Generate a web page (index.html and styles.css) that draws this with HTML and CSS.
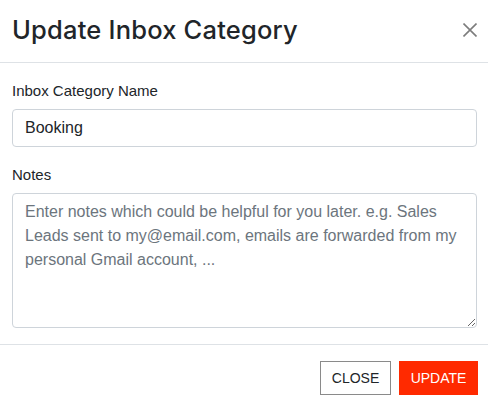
FILE: index.html
```html
<!DOCTYPE html>
<html>
<head>
<meta charset="utf-8">
<link rel="stylesheet" href="styles.css">
</head>
<body>
<div class="modal">
  <div class="modal-header">
    <h5 class="modal-title">Update Inbox Category</h5>
    <button class="close" aria-label="Close">
      <svg width="14" height="14" viewBox="0 0 14 14"><path d="M0.5 0.5 L13.5 13.5 M13.5 0.5 L0.5 13.5" stroke="#7d7d7d" stroke-width="1.6" fill="none"/></svg>
    </button>
  </div>
  <div class="modal-body">
    <div class="form-group first">
      <label class="label">Inbox Category Name</label>
      <input class="form-control" type="text" value="Booking">
    </div>
    <div class="form-group">
      <label class="label">Notes</label>
      <textarea class="form-control notes" placeholder="Enter notes which could be helpful for you later. e.g. Sales Leads sent to my@email.com, emails are forwarded from my personal Gmail account, ..."></textarea>
    </div>
  </div>
  <div class="modal-footer">
    <button class="btn btn-close">CLOSE</button>
    <button class="btn btn-update">UPDATE</button>
  </div>
</div>
</body>
</html>
```
FILE: styles.css
```css
* { box-sizing: border-box; }
html, body { margin: 0; padding: 0; background: #fff; }
body {
  font-family: "Liberation Sans", Arial, sans-serif;
  color: #212529;
  font-size: 16px;
}
.modal { width: 488px; }
.modal-header {
  display: flex;
  align-items: flex-start;
  justify-content: space-between;
  padding: 16px 10px 15px 12px;
  border-bottom: 1px solid #dee2e6;
  height: 63px;
}
.modal-title {
  margin: 0;
  font-family: Inter, "Noto Sans", sans-serif;
  font-size: 25.5px;
  line-height: 28.8px;
  font-weight: 500;
  letter-spacing: 0.2px;
}
.close {
  border: 0;
  background: none;
  padding: 0;
  margin: 7px 1px 0 0;
  width: 14px;
  height: 14px;
  display: block;
}
.close svg { display: block; }
.modal-body {
  padding: 17px 11px 16px 12px;
}
.form-group { margin-top: 17px; }
.form-group.first { margin-top: 0; }
.label {
  display: block;
  font-size: 15px;
  line-height: 21px;
  margin-bottom: 8px;
}
.form-control {
  display: block;
  width: 100%;
  font-family: "Liberation Sans", Arial, sans-serif;
  font-size: 16px;
  line-height: 24px;
  color: #212529;
  border: 1px solid #ced4da;
  border-radius: 4px;
  padding: 6px 12px;
  height: 38px;
  background: #fff;
  margin: 0;
}
.notes {
  height: 135px;
  resize: vertical;
}
.notes::placeholder { color: #6c757d; opacity: 1; }
.modal-footer {
  display: flex;
  justify-content: flex-end;
  gap: 8px;
  padding: 16px 10px 12px 12px;
  border-top: 1px solid #dee2e6;
}
.btn {
  font-family: "Liberation Sans", Arial, sans-serif;
  font-size: 14px;
  height: 34px;
  padding: 0;
  border-radius: 0;
  cursor: pointer;
}
.btn-close {
  width: 71px;
  background: #fff;
  color: #212529;
  border: 1px solid #8a8a8a;
}
.btn-update {
  width: 79px;
  background: #ff2a00;
  color: #fff;
  border: 1px solid #ff2a00;
}
```
